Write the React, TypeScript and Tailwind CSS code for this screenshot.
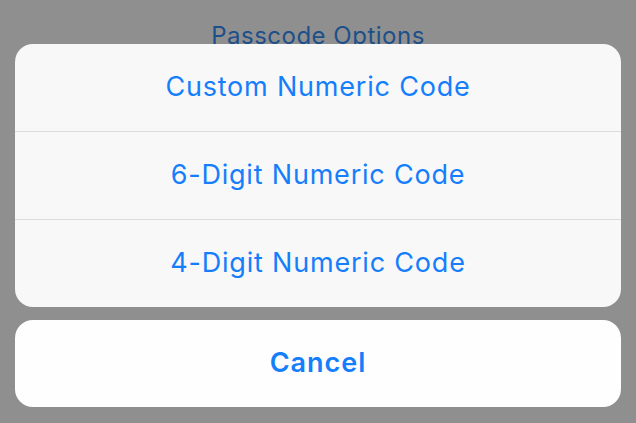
import React from "react";

const rows = ["Custom Numeric Code", "6-Digit Numeric Code", "4-Digit Numeric Code"];

export default function App() {
  return (
    <div
      className="w-[636px] h-[423px] bg-[#8f8f8f] flex flex-col overflow-hidden"
      style={{ fontFamily: "Inter, 'Liberation Sans', sans-serif" }}
    >
      <div className="h-[44px] overflow-hidden flex justify-center">
        <span className="pt-[22px] text-[24px] leading-[28px] text-[#1d4f8a] tracking-[0.5px]">
          Passcode Options
        </span>
      </div>
      <div className="mx-[15px] h-[263px] rounded-[18px] bg-[#f8f8f8] flex flex-col overflow-hidden">
        {rows.map((r, i) => (
          <div
            key={r}
            className={
              "flex-1 flex items-center justify-center text-[27px] tracking-[0.8px] text-[#157efb] " +
              (i > 0 ? "border-t border-[#dcdcdc]" : "")
            }
          >
            {r}
          </div>
        ))}
      </div>
      <div className="mx-[15px] mt-[13px] h-[87px] rounded-[18px] bg-[#fefefe] flex items-center justify-center text-[27px] tracking-[1px] font-semibold text-[#157efb]">
        Cancel
      </div>
    </div>
  );
}
